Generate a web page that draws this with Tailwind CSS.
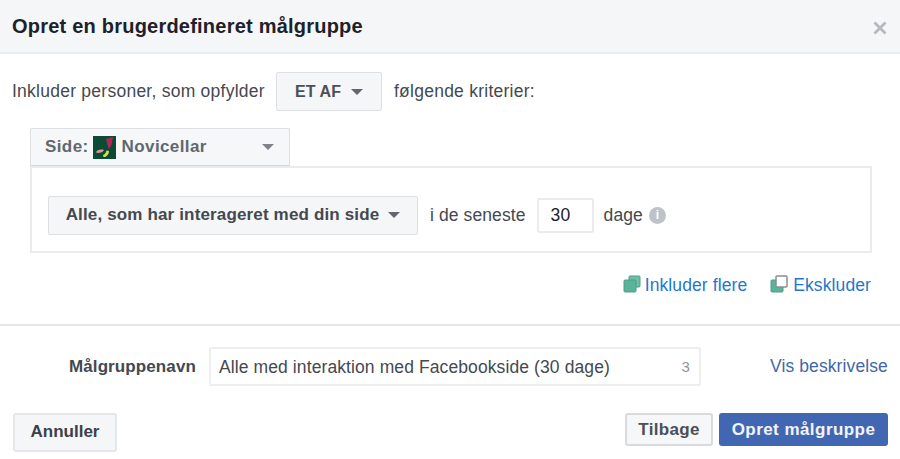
<!DOCTYPE html>
<html>
<head>
<meta charset="utf-8">
<script src="https://cdn.jsdelivr.net/npm/@tailwindcss/browser@4"></script>
</head>
<body class="bg-white overflow-hidden font-['Liberation_Sans',sans-serif] text-[#444950]">
<div class="w-[900px] h-[459px] flex flex-col">
  <header class="h-[54px] shrink-0 bg-[#f5f6f7] border-b-2 border-[#e9ebee] flex items-center justify-between pl-3 pr-[12px]">
    <h1 class="text-[20px] font-bold tracking-[0.22px] text-[#1d2129]">Opret en brugerdefineret målgruppe</h1>
    <svg class="w-[16px] h-[16px] mt-[3px]" viewBox="0 0 16 16"><path d="M2.5 2.500 13.500 13.500M13.500 2.500 2.500 13.500" stroke="#b4b8bf" stroke-width="2.800"/></svg>
  </header>

  <div class="flex items-center pl-3 mt-[18px] text-[17.5px] tracking-[0.25px]">
    <span class="w-[264px]">Inkluder personer, som opfylder</span>
    <div class="w-[106px] h-[39px] flex items-center justify-center gap-[10px] bg-[#f5f6f7] border border-[#dddfe2] rounded-[2px] font-bold text-[16px] tracking-[0.1px] text-[#4b4f56]">
      <span>ET AF</span>
      <span class="w-0 h-0 border-x-[6px] border-x-transparent border-t-[6px] border-t-[#606770]"></span>
    </div>
    <span class="ml-3">følgende kriterier:</span>
  </div>

  <div class="ml-[30px] mt-[17px] w-[842px]">
    <div class="w-[260px] h-[39px] flex items-center pl-[14px] pr-[15px] bg-[#f6f7f8] border border-[#dddfe2] border-b-2 border-b-[#d3d5d9] rounded-t-[2px] font-bold text-[17px] text-[#606770] tracking-[0.4px]">
      <span>Side:</span>
      <svg class="w-[23px] h-[23px] ml-[4px] mr-[6px] shrink-0" viewBox="0 0 23 23">
        <rect width="23" height="23" fill="#0c4a36"/>
        <path d="M13 3 20 1 18.500 9 16 13 14.500 9z" fill="#b32654"/>
        <path d="M3 16.500C4 13.500 8 13 11 14 9.500 16.500 6 17.500 3 16.500z" fill="#d59a94"/>
        <path d="M10 19C12 18.500 13 16.500 13.500 14.500L16 15C16 18 13.500 21.500 10.500 21z" fill="#d8dc46"/>
      </svg>
      <span>Novicellar</span>
      <span class="ml-auto w-0 h-0 border-x-[6px] border-x-transparent border-t-[6px] border-t-[#7f8389]"></span>
    </div>
    <div class="h-[87px] -mt-px border-2 border-[#e9ebee] flex items-center pl-[16px] pt-[11px] text-[17.5px] tracking-[0.1px]">
      <div class="w-[370px] h-[39px] flex items-center justify-center gap-[9px] bg-[#f5f6f7] border border-[#dddfe2] rounded-[2px] font-bold text-[17px] tracking-[0.15px] text-[#444950]">
        <span>Alle, som har interageret med din side</span>
        <span class="w-0 h-0 border-x-[6px] border-x-transparent border-t-[6px] border-t-[#606770]"></span>
      </div>
      <span class="ml-3">i de seneste</span>
      <div class="ml-[11px] w-[57px] h-[35px] flex items-center pl-[12px] bg-white border-2 border-[#e9ebee] rounded-[2px] text-[#1d2129]">30</div>
      <span class="ml-[10px]">dage</span>
      <span class="ml-[6px] w-[17px] h-[17px] rounded-full bg-[#bec2c9] text-white text-[12px] font-bold flex items-center justify-center">i</span>
    </div>
  </div>

  <div class="flex justify-end items-center mt-[20px] pr-[29px] text-[17.5px] text-[#1f78cc] h-[24px] tracking-[0.1px]">
    <svg class="w-[18px] h-[18px] mr-[4px] -mt-[3px]" viewBox="0 0 18 18">
      <rect x="6" y="1" width="11" height="11" rx="1" fill="#6fbfa8" stroke="#4c9d8a"/>
      <rect x="1" y="5" width="12" height="12" rx="1" fill="#5cb39b" stroke="#4c9d8a"/>
    </svg>
    <span>Inkluder flere</span>
    <svg class="w-[18px] h-[18px] ml-[23px] mr-[5px] -mt-[3px]" viewBox="0 0 18 18">
      <rect x="1" y="5" width="12" height="12" rx="1" fill="#5cb39b" stroke="#4c9d8a"/>
      <rect x="6" y="1" width="11" height="11" rx="1" fill="#fff" stroke="#8a8d91" stroke-width="1.500"/>
    </svg>
    <span>Ekskluder</span>
  </div>

  <div class="mt-[27px] h-[2px] bg-[#e4e6e9] shrink-0"></div>

  <div class="flex items-center mt-[21px] pl-[69px]">
    <span class="w-[140px] text-[17px] font-bold tracking-[0.1px] text-[#444950]">Målgruppenavn</span>
    <div class="w-[492px] h-[39px] flex items-center justify-between pl-[8px] pr-[9px] pt-px border-2 border-[#eceef0] rounded-[2px] text-[17.5px] tracking-[0.1px]">
      <span>Alle med interaktion med Facebookside (30 dage)</span>
      <span class="text-[15px] text-[#90949c]">3</span>
    </div>
    <span class="ml-[69px] text-[17.5px] text-[#4267a8] tracking-[0.1px]">Vis beskrivelse</span>
  </div>

  <div class="flex items-start justify-between mt-[27px] pl-[13px] pr-[12px]">
    <div class="w-[104px] h-[39px] flex items-center justify-center pb-px bg-[#f5f6f7] border-2 border-[#e4e6e9] rounded-[3px] text-[17px] font-bold text-[#3c4046]">Annuller</div>
    <div class="flex gap-[6px]">
      <div class="w-[88px] h-[33px] flex items-center justify-center bg-[#f6f7f9] border-2 border-[#d8dade] rounded-[3px] text-[17px] font-bold text-[#4b4f56] tracking-[0.3px]">Tilbage</div>
      <div class="w-[169px] h-[33px] flex items-center justify-center bg-[#4267b2] rounded-[3px] text-[17px] font-bold text-[#f2f4f9] tracking-[0.45px]">Opret målgruppe</div>
    </div>
  </div>
</div>
</body>
</html>
